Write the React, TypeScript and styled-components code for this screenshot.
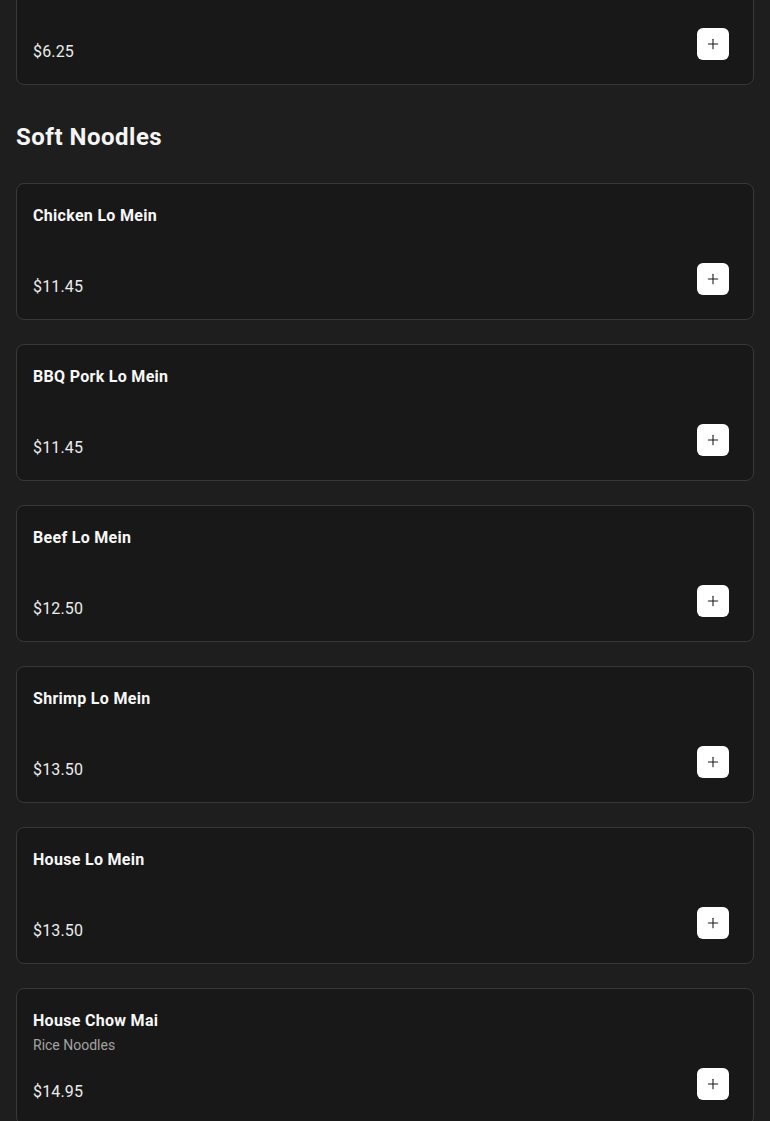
import React from "react";
import styled, { createGlobalStyle } from "styled-components";
import { Plus } from "lucide-react";

interface MenuItem {
  name: string;
  price: number;
  description?: string;
}

interface MenuSection {
  title?: string;
  items: MenuItem[];
}

const sections: MenuSection[] = [
  {
    items: [{ name: "Egg Drop Soup", price: 6.25 }],
  },
  {
    title: "Soft Noodles",
    items: [
      { name: "Chicken Lo Mein", price: 11.45 },
      { name: "BBQ Pork Lo Mein", price: 11.45 },
      { name: "Beef Lo Mein", price: 12.5 },
      { name: "Shrimp Lo Mein", price: 13.5 },
      { name: "House Lo Mein", price: 13.5 },
      { name: "House Chow Mai", price: 14.95, description: "Rice Noodles" },
      { name: "Singapore Noodles", price: 14.95, description: "Curry flavor" },
    ],
  },
];

const formatPrice = (n: number) => `$${n.toFixed(2)}`;

function App() {
  return (
    <>
      <GlobalStyle />
      <Page>
        {sections.map((section, i) => (
          <Section key={i}>
            {section.title && <SectionTitle>{section.title}</SectionTitle>}
            <ItemList>
              {section.items.map((item) => (
                <Card key={item.name}>
                  <Info>
                    <ItemName>{item.name}</ItemName>
                    {item.description && (
                      <Description>{item.description}</Description>
                    )}
                  </Info>
                  <Footer>
                    <Price>{formatPrice(item.price)}</Price>
                    <AddButton aria-label={`Add ${item.name}`}>
                      <Plus size={16} strokeWidth={1.6} />
                    </AddButton>
                  </Footer>
                </Card>
              ))}
            </ItemList>
          </Section>
        ))}
      </Page>
    </>
  );
}

const GlobalStyle = createGlobalStyle`
  html, body {
    margin: 0;
    padding: 0;
    background: #1e1e1e;
  }
  body {
    font-family: Roboto, "Noto Sans", sans-serif;
    color: #f5f5f5;
    overflow: hidden;
  }
`;

const Page = styled.main`
  padding: 0 16px 40px;
  margin-top: -52px;
  display: flex;
  flex-direction: column;
  gap: 36px;
`;

const Section = styled.section`
  display: flex;
  flex-direction: column;
`;

const SectionTitle = styled.h2`
  margin: 0 0 30px;
  font-size: 24px;
  line-height: 32px;
  font-weight: 700;
  letter-spacing: 0.5px;
  color: #f5f5f5;
`;

const ItemList = styled.div`
  display: flex;
  flex-direction: column;
  gap: 24px;
`;

const Card = styled.article`
  background: #181818;
  border: 1px solid #383838;
  border-radius: 8px;
  padding: 20px 16px 21px;
  display: flex;
  flex-direction: column;
`;

const Info = styled.div`
  min-height: 46px;
  display: flex;
  flex-direction: column;
  gap: 2px;
`;

const ItemName = styled.h3`
  margin: 0;
  font-size: 16px;
  line-height: 24px;
  font-weight: 700;
  letter-spacing: 0.3px;
  color: #f7f7f7;
`;

const Description = styled.p`
  margin: 0;
  font-size: 14px;
  line-height: 20px;
  color: #a3a3a3;
`;

const Footer = styled.div`
  margin-top: 13px;
  display: flex;
  justify-content: space-between;
  align-items: flex-end;
`;

const Price = styled.span`
  font-size: 16px;
  line-height: 22px;
  letter-spacing: 0.15px;
  color: #ececec;
`;

const AddButton = styled.button`
  width: 32px;
  height: 32px;
  margin: 0 8px 3px 0;
  border: none;
  border-radius: 6px;
  background: #ffffff;
  color: #1a1a1a;
  display: flex;
  align-items: center;
  justify-content: center;
  padding: 0;
  cursor: pointer;
`;

export default App;
